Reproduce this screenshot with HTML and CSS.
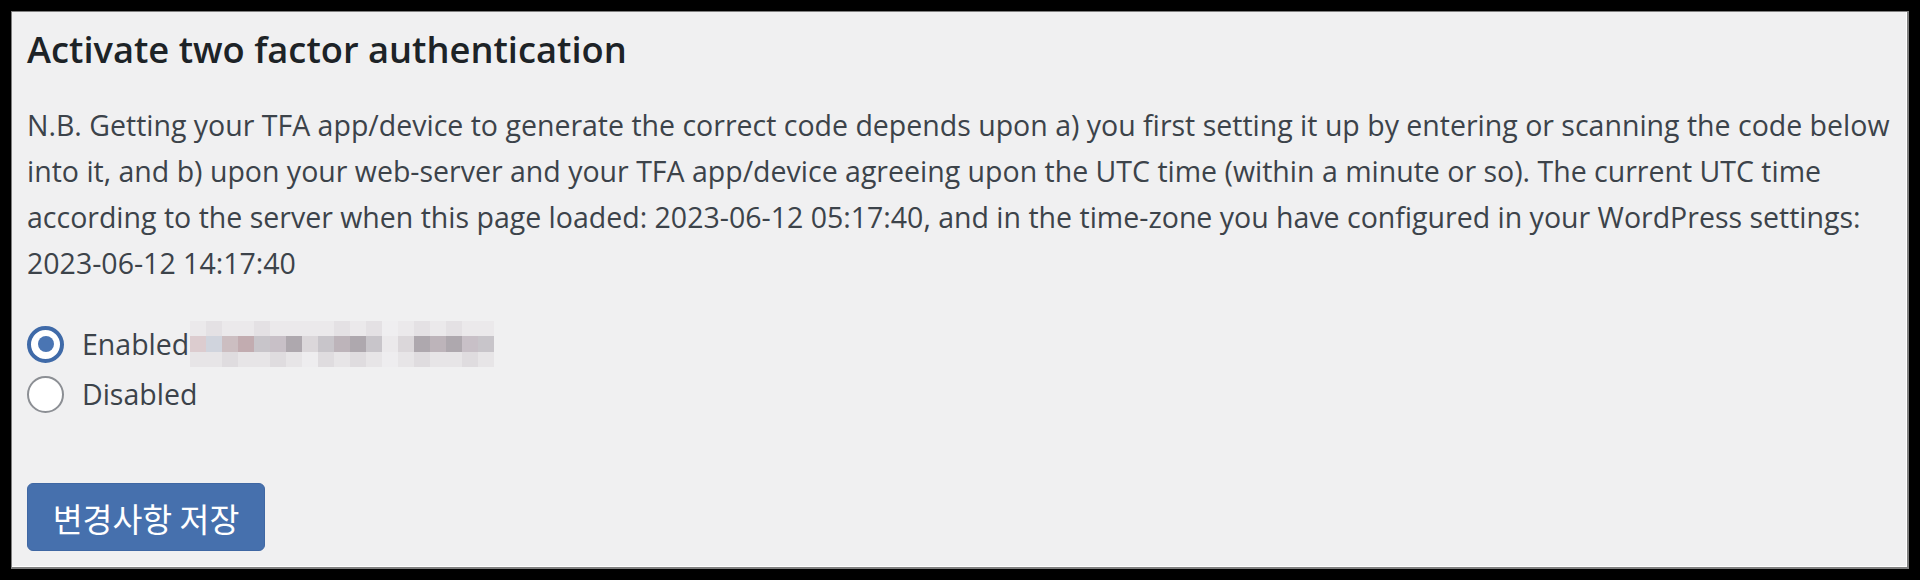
FILE: index.html
```html
<!DOCTYPE html>
<html lang="en">
<head>
<meta charset="utf-8">
<title>Activate two factor authentication</title>
<link rel="stylesheet" href="styles.css">
</head>
<body>
<div class="panel">
  <h2 class="title">Activate two factor authentication</h2>
  <p class="note">N.B. Getting your TFA app/device to generate the correct code depends upon a) you first setting it up by entering or scanning the code below into it, and b) upon your web-server and your TFA app/device agreeing upon the UTC time (within a minute or so). The current UTC time according to the server when this page loaded: 2023-06-12 05:17:40, and in the time-zone you have configured in your WordPress settings: 2023-06-12 14:17:40</p>
  <div class="options">
    <label class="option">
      <span class="radio checked"></span>
      <span class="label">Enabled</span>
      <span class="mosaic" aria-hidden="true">
        <i class="t1"></i><i class="t2"></i><i class="t1"></i><i class="t1"></i><i class="t2"></i><i class="t1"></i><i class="t1"></i><i class="t1"></i><i class="t1"></i><i class="t2"></i><i class="t1"></i><i class="t2"></i><i class="t0"></i><i class="t1"></i><i class="t2"></i><i class="t1"></i><i class="t2"></i><i class="t1"></i><i class="t1"></i>
        <i class="c1"></i><i class="c2"></i><i class="c3"></i><i class="c4"></i><i class="c5"></i><i class="c6"></i><i class="c7"></i><i class="c8"></i><i class="c5"></i><i class="c9"></i><i class="c7"></i><i class="c5"></i><i class="c0"></i><i class="c8"></i><i class="c7"></i><i class="c9"></i><i class="c7"></i><i class="c6"></i><i class="c5"></i>
        <i class="b1"></i><i class="b1"></i><i class="b2"></i><i class="b1"></i><i class="b1"></i><i class="b2"></i><i class="b1"></i><i class="b0"></i><i class="b2"></i><i class="b1"></i><i class="b2"></i><i class="b1"></i><i class="b0"></i><i class="b1"></i><i class="b2"></i><i class="b1"></i><i class="b1"></i><i class="b2"></i><i class="b1"></i>
      </span>
    </label>
    <label class="option">
      <span class="radio"></span>
      <span class="label">Disabled</span>
    </label>
  </div>
  <button class="save" type="button">변경사항 저장</button>
</div>
</body>
</html>
```
FILE: styles.css
```css
html, body {
  margin: 0;
  padding: 0;
  background: #000;
}
body {
  width: 1920px;
  height: 580px;
  padding: 11px;
  box-sizing: border-box;
}
.panel {
  box-sizing: border-box;
  height: 558px;
  background: #f0f0f1;
  border-top: 1px solid #7f7f7f;
  border-left: 1px solid #7f7f7f;
  border-right: 2px solid #7f7f7f;
  border-bottom: 2px solid #7f7f7f;
  box-shadow: inset -1px -1px 0 #ffffff;
  padding: 17px 14px 0 15px;
  font-family: "Open Sans", "Noto Sans", "Noto Sans CJK KR", sans-serif;
  color: #3c434a;
}
.title {
  margin: 0;
  font-size: 36.3px;
  line-height: 40px;
  font-weight: 600;
  color: #1d2327;
}
.note {
  margin: 33px 0 0;
  font-size: 28.5px;
  line-height: 46px;
}
.options {
  margin-top: 33px;
  display: flex;
  flex-direction: column;
}
.option {
  display: flex;
  align-items: center;
  height: 50px;
  font-size: 28.5px;
  line-height: 50px;
  color: #3c434a;
}
.radio {
  position: relative;
  box-sizing: border-box;
  width: 37px;
  height: 37px;
  border-radius: 50%;
  border: 2px solid #8c8f94;
  background: #fff;
  margin-right: 18px;
  flex: none;
}
.radio.checked {
  border: 4px solid #3f6aa8;
}
.radio.checked::after {
  content: "";
  position: absolute;
  left: 50%;
  top: 50%;
  width: 16px;
  height: 16px;
  margin: -8px 0 0 -8px;
  border-radius: 50%;
  background: #4a75b3;
}
.mosaic {
  display: grid;
  grid-template-columns: repeat(19, 16px);
  grid-template-rows: repeat(3, 15.3px);
  margin-left: 1px;
  align-self: center;
}
.mosaic i { display: block; }
.t0 { background: #efeef0; }
.t1 { background: #ebe9eb; }
.t2 { background: #e4e1e4; }
.b0 { background: #eeedef; }
.b1 { background: #e7e5e7; }
.b2 { background: #dfdcdf; }
.c0 { background: #ebe9eb; }
.c1 { background: #dccccf; }
.c2 { background: #d0d4dd; }
.c3 { background: #ccbec1; }
.c4 { background: #c2acb0; }
.c5 { background: #c8c5ca; }
.c6 { background: #c8c0c7; }
.c7 { background: #aea8ae; }
.c8 { background: #dbd7da; }
.c9 { background: #bdb4ba; }
.save {
  margin-top: 64px;
  box-sizing: border-box;
  width: 238px;
  height: 68px;
  border: 1px solid #3f67a3;
  border-radius: 6px;
  background: #4670ad;
  color: #ffffff;
  font-family: "Noto Sans CJK KR", sans-serif;
  font-size: 32.5px;
  padding: 0;
  cursor: pointer;
}
```
